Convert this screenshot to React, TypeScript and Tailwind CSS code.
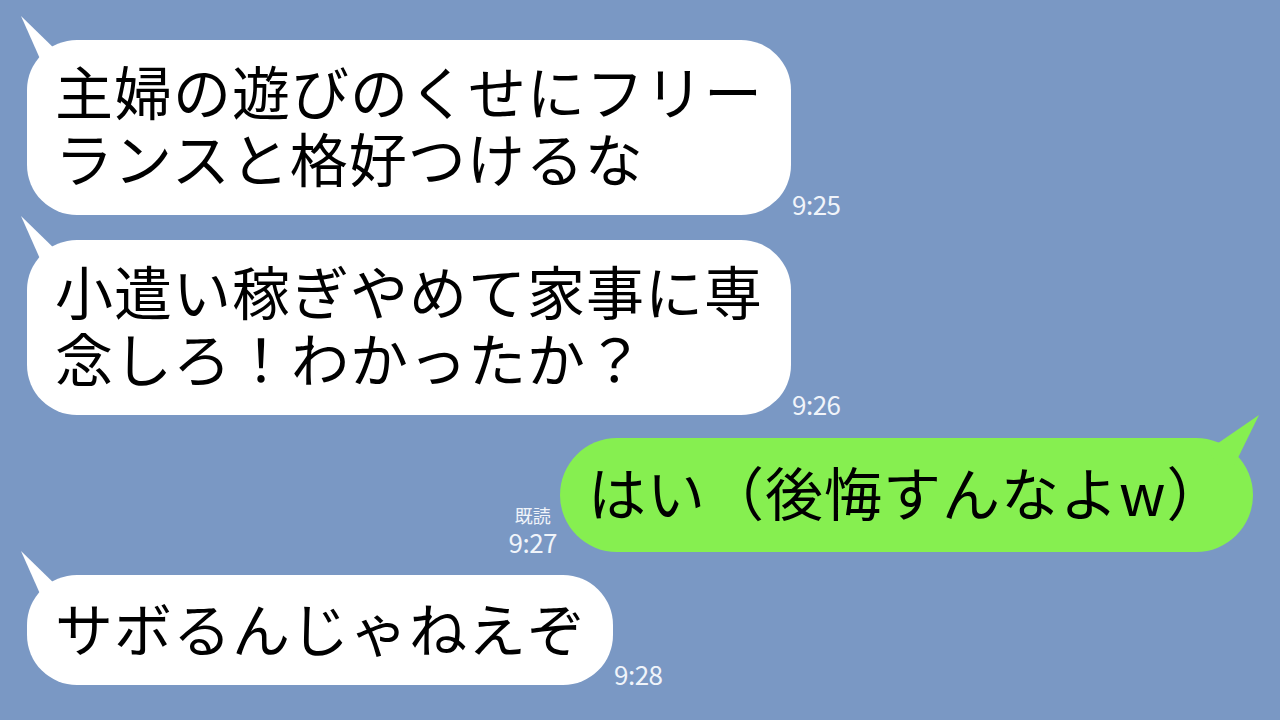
import React from 'react';

const FONT = { fontFamily: '"Noto Sans CJK JP", "Noto Sans", sans-serif' };

// left-side speech tail (white)
const LeftTail = () => (
  <svg className="absolute -left-[10px] -top-[28px]" width="60" height="70" viewBox="0 0 60 70">
    <polygon points="4,4 44,43 50,60 28,58" fill="#ffffff" />
  </svg>
);

// right-side speech tail (green)
const RightTail = () => (
  <svg className="absolute -right-[10px] -top-[25px]" width="60" height="70" viewBox="0 0 60 70">
    <polygon points="56,2 5,37 20,60 30,55" fill="#86ef50" />
  </svg>
);

const Time = ({ children }: { children: React.ReactNode }) => (
  <span className="ml-[1px] mb-[-5px] text-[26px] leading-[32px] tracking-[-0.5px] text-[#f0f4fa]">{children}</span>
);

export default function App() {
  return (
    <div className="w-[1280px] h-[720px] bg-[#7a98c4] overflow-hidden pt-[40px] px-[27px]" style={FONT}>
      <div className="flex items-end">
        <div className="relative w-[764px] h-[175px] bg-white rounded-[50px] pl-[28px] pt-[17px] text-[58px] leading-[67px] tracking-[1px] text-black whitespace-nowrap">
          <LeftTail />
          <div className="relative">主婦の遊びのくせにフリー<br />ランスと格好つけるな</div>
        </div>
        <Time>9:25</Time>
      </div>

      <div className="flex items-end mt-[25px]">
        <div className="relative w-[764px] h-[175px] bg-white rounded-[50px] pl-[28px] pt-[17px] text-[58px] leading-[67px] tracking-[1px] text-black whitespace-nowrap">
          <LeftTail />
          <div className="relative">小遣い稼ぎやめて家事に専<br />念しろ！わかったか？</div>
        </div>
        <Time>9:26</Time>
      </div>

      <div className="flex items-end justify-end mt-[23px]">
        <div className="flex flex-col items-center mr-[3px] mb-[-5px] text-[#f0f4fa]">
          <span className="text-[18px] leading-[24px]">既読</span>
          <span className="text-[26px] leading-[30px] tracking-[-0.5px]">9:27</span>
        </div>
        <div className="relative w-[693px] h-[114px] bg-[#86ef50] rounded-full pl-[28px] pt-[20px] text-[58px] leading-[67px] tracking-[1px] text-black whitespace-nowrap">
          <RightTail />
          <div className="relative">はい（後悔すんなよw）</div>
        </div>
      </div>

      <div className="flex items-end mt-[23px]">
        <div className="relative w-[586px] h-[110px] bg-white rounded-[50px] pl-[28px] pt-[19px] text-[58px] leading-[67px] tracking-[1px] text-black whitespace-nowrap">
          <LeftTail />
          <div className="relative">サボるんじゃねえぞ</div>
        </div>
        <Time>9:28</Time>
      </div>
    </div>
  );
}
